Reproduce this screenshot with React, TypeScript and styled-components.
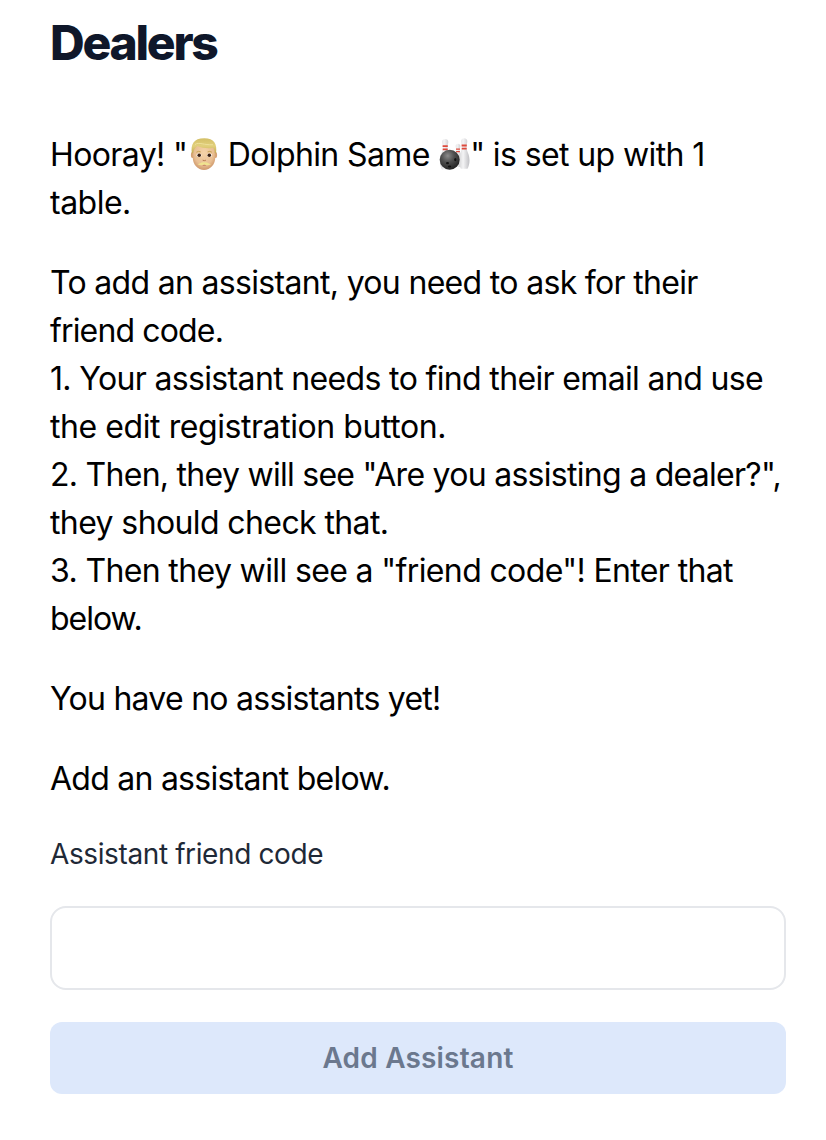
import React from "react";
import styled, { createGlobalStyle } from "styled-components";

const Global = createGlobalStyle`
  *, *::before, *::after { box-sizing: border-box; }
  body {
    margin: 0;
    background: #ffffff;
    color: #000000;
    font-family: Inter, "Liberation Sans", sans-serif;
    font-optical-sizing: none;
    font-variation-settings: "opsz" 14;
    -webkit-font-smoothing: antialiased;
  }
`;

const Page = styled.main`
  display: flex;
  flex-direction: column;
  width: 826px;
  min-height: 1140px;
  padding: 19px 40px 46px 50px;
`;

const Title = styled.h1`
  margin: 0 0 64px;
  color: #0f172a;
  font-size: 48px;
  font-weight: 800;
  line-height: 48px;
  letter-spacing: -2.25px;
`;

const Paragraph = styled.p`
  margin: 0 0 32px;
  font-size: 32px;
  font-weight: 430;
  line-height: 48px;
`;

const Line = styled.span<{ $tracking: number }>`
  display: block;
  width: max-content;
  white-space: pre;
  letter-spacing: ${(p) => p.$tracking}px;
`;

const Emoji = styled.svg`
  display: inline-block;
  width: 34px;
  height: 34px;
  margin: -4px -2px -4px 0;
  vertical-align: -4px;
  transform: translateY(-3px);
`;

const Form = styled.form`
  display: flex;
  flex-direction: column;
  margin-top: -1px;
`;

const Label = styled.label`
  margin-bottom: 32px;
  color: #1f2937;
  font-size: 28px;
  line-height: 40px;
  letter-spacing: -0.39px;
`;

const Input = styled.input`
  width: 736px;
  height: 84px;
  margin-bottom: 32px;
  padding: 16px 24px;
  border: 2px solid #e5e7eb;
  border-radius: 16px;
  background: #ffffff;
  font: inherit;
  font-size: 32px;
  outline: none;
`;

const Button = styled.button`
  width: 736px;
  height: 72px;
  padding: 0;
  border: 0;
  border-radius: 12px;
  background: #dde8fb;
  color: #6b788e;
  font-family: inherit;
  font-size: 28px;
  font-weight: 600;
  letter-spacing: 0.18px;
`;

const ManEmoji = () => (
  <Emoji viewBox="0 0 34 34" role="img" aria-label="blond man">
    <defs>
      <radialGradient id="skin" cx="0.5" cy="0.4" r="0.65">
        <stop offset="0" stopColor="#f5d3a9" />
        <stop offset="0.65" stopColor="#e9bf93" />
        <stop offset="1" stopColor="#c88f62" />
      </radialGradient>
      <linearGradient id="hair" x1="0" y1="0" x2="0" y2="1">
        <stop offset="0" stopColor="#d3bf66" />
        <stop offset="0.5" stopColor="#e2d07c" />
        <stop offset="1" stopColor="#c4aa52" />
      </linearGradient>
    </defs>
    <ellipse cx="5.400" cy="18" rx="1.500" ry="3" fill="#d6a275" />
    <ellipse cx="28.600" cy="18" rx="1.500" ry="3" fill="#d6a275" />
    <path d="M5.700 12C5.700 6 10 4 17 4s11.300 2 11.300 8v8c0 7.500-5 13-11.300 13S5.700 27.500 5.700 20Z" fill="url(#skin)" />
    <path d="M4.900 16.500C3.500 7.500 6.500 1.300 17.300 1.300c9.700 0 13.200 5.700 11.700 15.200l-1.200-.5c0-2.200-.4-4-1.700-5.200-4 1-10.800.6-15.800-1.700-2 1.800-3.900 3.900-4.100 6.900Z" fill="url(#hair)" />
    <path d="M8 7.500c4-2.800 9 .8 18 .2" stroke="#eee09a" strokeWidth="1" fill="none" />
    <path d="M9.400 15.200q2.200-1.500 4.300-.3M20.600 14.900q2.200-1.200 4.300.3" stroke="#c7a352" strokeWidth="1" fill="none" />
    <ellipse cx="12" cy="18.200" rx="2.600" ry="1.700" fill="#fff" />
    <ellipse cx="22.500" cy="18.200" rx="2.600" ry="1.700" fill="#fff" />
    <circle cx="12.200" cy="18.200" r="1.800" fill="#3d2112" />
    <circle cx="22.300" cy="18.200" r="1.800" fill="#3d2112" />
    <path d="M15.700 23.200q1.600.9 3.200 0" stroke="#b97b50" strokeWidth="1" fill="none" />
    <path d="M15 27.700h4.600q-2.300 1.700-4.600 0Z" fill="#b3604c" />
    <path d="M10.600 27.200c2-.4 3.800-2.700 6.700-1.900 2.900-.8 4.700 1.500 6.700 1.900-2.400 1.300-5 1.100-6.700.3-1.700.8-4.300 1-6.700-.3Z" fill="#f0e38f" />
  </Emoji>
);

const Pin = ({ transform }: { transform: string }) => (
  <g transform={transform}>
    <path
      d="M0 0C2 0 3.100 1.300 3.100 3.100c0 2-1 3-.8 6 .3 4.500 3 6.300 3 12.900 0 4-1 6.500-2 8.500H-3.300c-1-2-2-4.500-2-8.500 0-6.600 2.700-8.400 3-12.900.2-3-.8-4-.8-6C-3.100 1.300-2 0 0 0Z"
      fill="url(#pin)"
    />
    <path d="M-2.600 7.200h5.200M-2.500 10.400h5" stroke="#de4a3c" strokeWidth="1.800" />
  </g>
);

const BowlingEmoji = () => (
  <Emoji viewBox="0 0 34 34" role="img" aria-label="bowling">
    <defs>
      <linearGradient id="pin" x1="0" y1="0" x2="1" y2="0">
        <stop offset="0" stopColor="#d4d4d6" />
        <stop offset="0.4" stopColor="#f4f4f5" />
        <stop offset="1" stopColor="#c0c0c4" />
      </linearGradient>
      <radialGradient id="ball" cx="0.4" cy="0.3" r="0.7">
        <stop offset="0" stopColor="#8c8c8c" />
        <stop offset="0.45" stopColor="#505050" />
        <stop offset="1" stopColor="#242424" />
      </radialGradient>
    </defs>
    <Pin transform="translate(7.200 2)" />
    <Pin transform="translate(20 6.700) scale(.76)" />
    <Pin transform="translate(26.200 1.300)" />
    <circle cx="11.700" cy="22.800" r="10" fill="url(#ball)" />
    <ellipse cx="17.300" cy="22.600" rx="1.100" ry="1.600" fill="#111" />
    <ellipse cx="9.500" cy="26.100" rx="1.500" ry="1.200" fill="#111" />
    <ellipse cx="11.500" cy="29.500" rx="1.700" ry="1.100" fill="#111" />
  </Emoji>
);

export default function App() {
  return (
    <>
      <Global />
      <Page>
        <Title>Dealers</Title>
        <Paragraph>
          <Line $tracking={-0.61}>
            Hooray! "<ManEmoji /> Dolphin Same <BowlingEmoji />" is set up with 1
          </Line>
          <Line $tracking={-0.5}>table.</Line>
        </Paragraph>
        <Paragraph>
          <Line $tracking={-0.68}>To add an assistant, you need to ask for their</Line>
          <Line $tracking={-0.85}>friend code.</Line>
          <Line $tracking={-0.65}>1. Your assistant needs to find their email and use</Line>
          <Line $tracking={-0.43}>the edit registration button.</Line>
          <Line $tracking={-0.72}>2. Then, they will see "Are you assisting a dealer?",</Line>
          <Line $tracking={-0.61}>they should check that.</Line>
          <Line $tracking={-0.63}>3. Then they will see a "friend code"! Enter that</Line>
          <Line $tracking={-1}>below.</Line>
        </Paragraph>
        <Paragraph>
          <Line $tracking={-0.74}>You have no assistants yet!</Line>
        </Paragraph>
        <Paragraph>
          <Line $tracking={-0.75}>Add an assistant below.</Line>
        </Paragraph>
        <Form>
          <Label htmlFor="friend-code">Assistant friend code</Label>
          <Input id="friend-code" type="text" />
          <Button type="button" disabled>
            Add Assistant
          </Button>
        </Form>
      </Page>
    </>
  );
}
